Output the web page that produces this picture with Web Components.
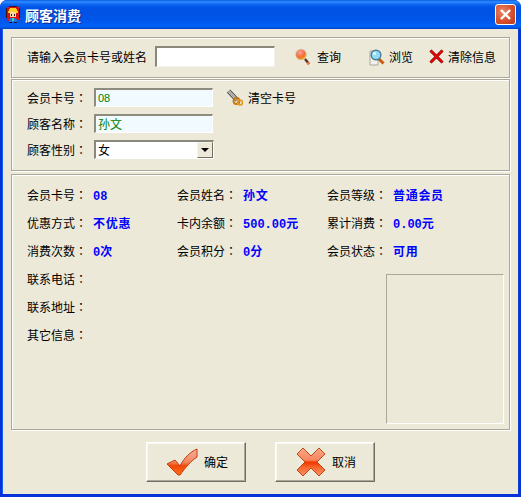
<!DOCTYPE html>
<html lang="zh"><head><meta charset="utf-8"><title>顾客消费</title>
<style>
html,body{margin:0;padding:0;background:#fff}
body{font:12px/14px "Noto Sans CJK SC","Liberation Sans",sans-serif;color:#000}
</style></head><body>
<xp-window>
  <xp-titlebar slot="title" text="顾客消费"></xp-titlebar>

  <xp-group style="height:41px;margin-bottom:1px" row>
    <span style="width:128px">请输入会员卡号或姓名</span>
    <xp-input plain style="width:120px;height:21px"></xp-input>
    <xp-tool style="margin-left:20px" gap="6">
      <svg slot="icon" width="16" height="18" viewBox="0 0 16 18"><defs><radialGradient id="o" cx=".4" cy=".3" r=".8"><stop offset="0" stop-color="#ffa0a0"/><stop offset=".55" stop-color="#f07030"/><stop offset="1" stop-color="#ffb000"/></radialGradient></defs><path d="M10 11l4 5" stroke="#5a3020" stroke-width="2.4"/><path d="M12.5 14.5l1.5 2" stroke="#f08040" stroke-width="2.4"/><circle cx="6" cy="6.500" r="5.200" fill="url(#o)" stroke="#c8b8a0" stroke-width=".7"/></svg>
      查询
    </xp-tool>
    <xp-tool style="margin-left:28px" gap="4">
      <svg slot="icon" width="16" height="18" viewBox="0 0 16 18"><path d="M1 3h8v14H1z" fill="#f4f2ea" stroke="#a8a8a0"/><path d="M9.500 10.500l5 5" stroke="#c85a10" stroke-width="3"/><circle cx="7" cy="7" r="4.800" fill="#8fdcf8" stroke="#4a7a98" stroke-width="1.400"/><circle cx="5.500" cy="5.500" r="1.500" fill="#e6fbff"/></svg>
      浏览
    </xp-tool>
    <xp-tool style="margin-left:16px" gap="4">
      <svg slot="icon" width="15" height="15" viewBox="0 0 15 15"><path d="M1.500 1.500l12 12M13.500 1.500l-12 12" stroke="#500" stroke-width="2.900"/><path d="M1.500 1.500l12 12M13.500 1.500l-12 12" stroke="#f00000" stroke-width="2"/></svg>
      清除信息
    </xp-tool>
  </xp-group>

  <xp-group style="height:92px;margin-bottom:3px">
    <div style="display:grid;grid-template-rows:19px 19px 19px;row-gap:7px;margin-top:8px">
      <xp-field label="会员卡号：">
        <xp-input tint style="width:119px;height:19px"><span style="font:11px/14px 'Liberation Sans',sans-serif">08</span></xp-input>
        <xp-tool style="margin-left:14px" gap="5">
          <svg slot="icon" width="16" height="18" viewBox="0 0 16 18"><path d="M1.500 2l8.500 9" stroke="#444" stroke-width="4.600"/><path d="M1.500 2l8.500 9" stroke="#c8c8c0" stroke-width="2.600"/><path d="M1.500 2l8.500 9" stroke="#808078" stroke-width=".8"/><circle cx="9.500" cy="12" r="3" fill="none" stroke="#c87810" stroke-width="1.800"/><circle cx="13" cy="13.500" r="2.500" fill="none" stroke="#e09820" stroke-width="1.600"/></svg>
          清空卡号
        </xp-tool>
      </xp-field>
      <xp-field label="顾客名称："><xp-input tint style="width:119px;height:19px">孙文</xp-input></xp-field>
      <xp-field label="顾客性别："><xp-select style="width:120px;height:19px">女</xp-select></xp-field>
    </div>
  </xp-group>

  <xp-group style="height:256px">
    <div style="display:grid;grid-template-columns:150px 150px 1fr;grid-template-rows:repeat(5,28px) 1fr;height:100%;margin-top:6px">
      <xp-info label="会员卡号：">08</xp-info>
      <xp-info label="会员姓名：" wide>孙文</xp-info>
      <xp-info label="会员等级：" wide>普通会员</xp-info>
      <xp-info label="优惠方式：" wide>不优惠</xp-info>
      <xp-info label="卡内余额：">500.00元</xp-info>
      <xp-info label="累计消费：">0.00元</xp-info>
      <xp-info label="消费次数：">0次</xp-info>
      <xp-info label="会员积分：">0分</xp-info>
      <xp-info label="会员状态：" wide>可用</xp-info>
      <xp-info label="联系电话：" style="grid-column:1"></xp-info>
      <xp-photo style="grid-column:3;grid-row:4 / 7"></xp-photo>
      <xp-info label="联系地址：" style="grid-column:1"></xp-info>
      <xp-info label="其它信息：" style="grid-column:1"></xp-info>
    </div>
  </xp-group>

  <div style="display:flex;justify-content:center;gap:29px;margin-top:12px;padding-right:1px">
    <xp-button text="确定" gap="6">
      <svg slot="icon" width="32" height="28" viewBox="0 0 32 28"><defs><linearGradient id="c" x1="0" y1="0" x2="0" y2="1"><stop offset="0" stop-color="#f8b0a0"/><stop offset=".5" stop-color="#f08860"/><stop offset=".65" stop-color="#f04808"/><stop offset="1" stop-color="#ff7020"/></linearGradient></defs><path d="M1 16l8-4 5 6C18 10 24 4 31 1v8C25 13 19 20 14 27h-2z" fill="url(#c)" stroke="#c83808" stroke-width="1"/></svg>
    </xp-button>
    <xp-button text="取消" gap="6">
      <svg slot="icon" width="30" height="30" viewBox="0 0 30 30"><defs><linearGradient id="x" x1="0" y1="0" x2="0" y2="1"><stop offset="0" stop-color="#f8a888"/><stop offset=".42" stop-color="#f88860"/><stop offset=".52" stop-color="#f03800"/><stop offset=".7" stop-color="#f86830"/><stop offset="1" stop-color="#f89068"/></linearGradient></defs><path d="M7 1l8 8 8-8 6 6-8 8 8 8-6 6-8-8-8 8-6-6 8-8-8-8z" fill="url(#x)" stroke="#c04818" stroke-width="1"/></svg>
    </xp-button>
  </div>
</xp-window>

<script>
function def(name, css, html, init){
  customElements.define(name, class extends HTMLElement{
    constructor(){super();const r=this.attachShadow({mode:'open'});r.innerHTML='<style>'+css+'</style>'+html;}
    connectedCallback(){ if(init) init.call(this,this.shadowRoot); }
  });
}
function setLabel(el,text){
  el.textContent=text.replace(/：$/,'');
  const c=document.createElement('span');c.textContent='：';c.lang='zh-TW';
  c.style.fontFamily='"Noto Sans CJK TC",sans-serif';
  el.appendChild(c);
}
def('xp-window',
`:host{display:flex;flex-direction:column;width:521px;height:497px;box-sizing:border-box;background:#0831d9;border-radius:7px 7px 0 0;overflow:hidden}
 .client{flex:1;margin:0 3px 3px 3px;padding:8px 8px 0;background:#ece9d8;box-sizing:border-box;border:0;box-shadow:-1px 0 0 #1660f0,1px 0 0 #0a3fd0}`,
`<slot name="title"></slot><div class="client"><slot></slot></div>`);

def('xp-titlebar',
`:host{display:flex;align-items:center;height:29px;flex:none;padding-left:5px;box-sizing:border-box;
 background:linear-gradient(180deg,#0a5fe8 0,#2f8cff 2px,#1068f4 4px,#0054e6 7px,#0052e4 14px,#0058ee 22px,#0062f8 26px,#0050dc 28px,#0040c8 29px)}
 .t{font:bold 14px/16px "Noto Sans CJK SC",sans-serif;color:#fff;margin-left:4px;text-shadow:1px 1px 0 #0a2a90}
 svg{display:block;flex:none}
 .close{margin-left:auto;margin-right:5px;width:21px;height:21px;box-sizing:border-box;border:1px solid #fff;border-radius:3px;background:radial-gradient(circle at 35% 35%,#e8896a,#d8502c 55%,#b83a18);display:flex;align-items:center;justify-content:center}`,
`<svg width="16" height="17" viewBox="0 0 16 17" shape-rendering="crispEdges">
<path d="M4 0h8v1h2v1h1v10h-1v2h-1v1H3v-1H2v-2H1V2h1V1h2z" fill="#d81010"/>
<path d="M1 2h1v10H1zM14 2h1v10h-1zM4 0h8v1H4z" fill="#401010"/>
<path d="M5 2h6v1h1v2h1v2H3V5h1V3h1z" fill="#ffd020"/>
<path d="M5 6h6v5H5z" fill="#ffd8a8"/>
<path d="M6 8h1v2H6zM9 8h1v2H9z" fill="#181818"/>
<path d="M5 12h6v1h1v3H4v-3h1z" fill="#2070e8"/>
<path d="M7 12h2v3H7z" fill="#40d0a0"/>
<path d="M4 16h3v1H4zM9 16h3v1H9z" fill="#181818"/>
</svg><span class="t"></span>
<span class="close"><svg width="13" height="13" viewBox="0 0 13 13"><path d="M2 2l9 9M11 2l-9 9" stroke="#fff" stroke-width="2.400"/></svg></span>`,
function(r){r.querySelector('.t').textContent=this.getAttribute('text');});

def('xp-group',
`:host{display:block;box-sizing:border-box;width:499px;border:1px solid #aca899;box-shadow:inset 1px 1px 0 #fff,1px 1px 0 #fff;padding:0 0 0 15px}
 :host([row]) .w{display:flex;align-items:center;height:100%;padding-bottom:2px}
 .w{box-sizing:border-box;height:100%}`,
`<div class="w"><slot></slot></div>`);

def('xp-field',
`:host{display:flex;align-items:center}
 .l{width:67px;flex:none}`,
`<span class="l"></span><slot></slot>`,
function(r){setLabel(r.querySelector('.l'),this.getAttribute('label'));});

def('xp-input',
`:host{display:flex;align-items:center;box-sizing:border-box;flex:none;padding-left:2px;
 border-style:solid;border-width:2px 1px 1px 2px;border-color:#8e8c7e #fff #fff #8e8c7e;background:#f0faff;color:#008000}
 :host([plain]){background:#fff;border-color:#8a887a #f4f2e8 #f4f2e8 #8a887a}`,
`<slot></slot>`);

def('xp-select',
`:host{display:flex;align-items:center;box-sizing:border-box;flex:none;padding-left:2px;background:#fff;
 border-style:solid;border-width:2px 1px 1px 2px;border-color:#8a887a #fff #fff #8a887a;position:relative}
 .b{margin-left:auto;width:16px;height:100%;box-sizing:border-box;background:#ece9d8;border:1px solid;border-color:#f6f5ec #716f64 #716f64 #f6f5ec;display:flex;align-items:center;justify-content:center}
 .a{width:0;height:0;border:4px solid transparent;border-top:4px solid #000;border-bottom:0}`,
`<slot></slot><span class="b"><span class="a"></span></span>`);

def('xp-tool',
`:host{display:inline-flex;align-items:center;flex:none}
 ::slotted(svg){display:block;flex:none}
 .g{display:flex;align-items:center}`,
`<span class="g"><slot name="icon"></slot></span><span class="s"><slot></slot></span>`,
function(r){r.querySelector('.s').style.marginLeft=(this.getAttribute('gap')||4)+'px';});

def('xp-info',
`:host{display:flex;align-items:center;height:28px}
 .l{width:66px;flex:none}
 .v{font:bold 12px/14px "Liberation Mono","Noto Sans CJK SC",monospace;color:#00f;white-space:nowrap;padding-top:3px}
 :host([wide]) .v{letter-spacing:.7px}`,
`<span class="l"></span><span class="v"><slot></slot></span>`,
function(r){setLabel(r.querySelector('.l'),this.getAttribute('label'));});

def('xp-photo',
`:host{display:block;box-sizing:border-box;width:118px;height:150px;margin:9px 0 0 59px;border:1px solid;border-color:#aca899 #fff #fff #aca899}`,``);

def('xp-button',
`:host{display:flex;align-items:center;justify-content:center;box-sizing:border-box;width:100px;height:40px;flex:none;background:#ece9d8;padding-left:3px;
 border:1px solid;border-color:#fff #716f64 #716f64 #fff;box-shadow:inset -1px -1px 0 #aca899,inset 1px 1px 0 #f8f7f0}
 ::slotted(svg){display:block;flex:none}`,
`<slot name="icon"></slot><slot></slot><span class="t"></span>`,
function(r){
  const t=r.querySelector('.t');t.textContent=this.getAttribute('text');t.style.marginLeft=(this.getAttribute('gap')||6)+'px';
  this.querySelector('svg').setAttribute('slot','icon');
});
</script>
</body></html>
